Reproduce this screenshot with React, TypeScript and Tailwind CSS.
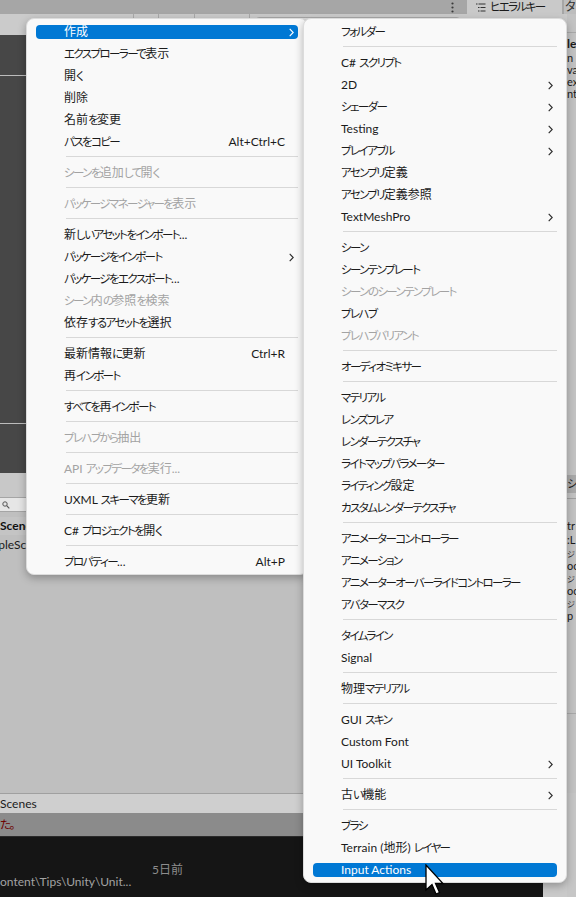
import React from 'react';

type Entry =
  | { label: string; shortcut?: string; arrow?: boolean; disabled?: boolean; active?: boolean }
  | 'sep';

const leftItems: Entry[] = [
  { label: '作成', arrow: true, active: true },
  { label: 'エクスプローラーで表示' },
  { label: '開く' },
  { label: '削除' },
  { label: '名前を変更' },
  { label: 'パスをコピー', shortcut: 'Alt+Ctrl+C' },
  'sep',
  { label: 'シーンを追加して開く', disabled: true },
  'sep',
  { label: 'パッケージマネージャーを表示', disabled: true },
  'sep',
  { label: '新しいアセットをインポート...' },
  { label: 'パッケージをインポート', arrow: true },
  { label: 'パッケージをエクスポート...' },
  { label: 'シーン内の参照を検索', disabled: true },
  { label: '依存するアセットを選択' },
  'sep',
  { label: '最新情報に更新', shortcut: 'Ctrl+R' },
  { label: '再インポート' },
  'sep',
  { label: 'すべてを再インポート' },
  'sep',
  { label: 'プレハブから抽出', disabled: true },
  'sep',
  { label: 'API アップデータを実行...', disabled: true },
  'sep',
  { label: 'UXML スキーマを更新' },
  'sep',
  { label: 'C# プロジェクトを開く' },
  'sep',
  { label: 'プロパティー...', shortcut: 'Alt+P' },
];

const subItems: Entry[] = [
  { label: 'フォルダー' },
  'sep',
  { label: 'C# スクリプト' },
  { label: '2D', arrow: true },
  { label: 'シェーダー', arrow: true },
  { label: 'Testing', arrow: true },
  { label: 'プレイアブル', arrow: true },
  { label: 'アセンブリ定義' },
  { label: 'アセンブリ定義参照' },
  { label: 'TextMeshPro', arrow: true },
  'sep',
  { label: 'シーン' },
  { label: 'シーンテンプレート' },
  { label: 'シーンのシーンテンプレート', disabled: true },
  { label: 'プレハブ' },
  { label: 'プレハブバリアント', disabled: true },
  'sep',
  { label: 'オーディオミキサー' },
  'sep',
  { label: 'マテリアル' },
  { label: 'レンズフレア' },
  { label: 'レンダーテクスチャ' },
  { label: 'ライトマップパラメーター' },
  { label: 'ライティング設定' },
  { label: 'カスタムレンダーテクスチャ' },
  'sep',
  { label: 'アニメーターコントローラー' },
  { label: 'アニメーション' },
  { label: 'アニメーターオーバーライドコントローラー' },
  { label: 'アバターマスク' },
  'sep',
  { label: 'タイムライン' },
  { label: 'Signal' },
  'sep',
  { label: '物理マテリアル' },
  'sep',
  { label: 'GUI スキン' },
  { label: 'Custom Font' },
  { label: 'UI Toolkit', arrow: true },
  'sep',
  { label: '古い機能', arrow: true },
  'sep',
  { label: 'ブラシ' },
  { label: 'Terrain (地形) レイヤー' },
  { label: 'Input Actions', active: true },
];

// Kana are drawn a touch smaller and tighter, as Yu Gothic UI does.
function Label({ text }: { text: string }) {
  const parts = text.split(/([\u3040-\u30ff]+)/);
  return (
    <>
      {parts.map((p, i) =>
        /^[\u3040-\u30ff]+$/.test(p) ? (
          <span key={i} className="text-[11.5px] tracking-[-1.6px]">
            {p}
          </span>
        ) : (
          <span key={i}>{p}</span>
        )
      )}
    </>
  );
}

function Chevron({ white }: { white?: boolean }) {
  return (
    <svg width="5" height="9" viewBox="0 0 5 9" className="block">
      <path
        d="M0.7 0.8 L4.2 4.5 L0.7 8.2"
        fill="none"
        stroke={white ? '#ffffff' : '#2a2a2a'}
        strokeWidth="1.1"
      />
    </svg>
  );
}

function Menu({ items, pos }: { items: Entry[]; pos: string }) {
  return (
    <div
      className={`absolute top-[18px] rounded-[8px] border border-[#dcdcdc] bg-[#f9f9f9] px-[9px] pt-[1px] pb-[2px] shadow-[0_3px_8px_rgba(0,0,0,0.28)] ${pos}`}
    >
      {items.map((it, i) =>
        it === 'sep' ? (
          <div key={i} className="flex h-[9px] items-center">
            <div className="ml-[30px] h-px flex-1 bg-[#d8d8d8]" />
          </div>
        ) : (
          <div key={i} className="h-[22px] pt-[5px]">
            <div
              className={`flex h-[14px] items-center rounded-[4px] pl-[28px] pr-[4px] ${
                it.active
                  ? 'bg-[#0078d4] text-white'
                  : it.disabled
                  ? 'text-[#a3a3a3]'
                  : 'text-[#1b1b1b]'
              }`}
            >
              <span className="flex-1 whitespace-nowrap leading-[14px]">
                <Label text={it.label} />
              </span>
              {it.shortcut && <span className="whitespace-nowrap leading-[14px]">{it.shortcut}</span>}
              <span className="flex w-[9px] justify-end">{it.arrow && <Chevron white={it.active} />}</span>
            </div>
          </div>
        )
      )}
    </div>
  );
}

export default function App() {
  return (
    <div className="relative h-[897px] w-[576px] overflow-hidden bg-[#c2c2c2] font-['Lato','Noto_Sans_CJK_JP',sans-serif] text-[12px] [font-feature-settings:'palt']">
      <div className="flex h-full flex-col">
        {/* title / tab row */}
        <div className="flex h-[14px] bg-[#a6a6a6]">
          <div className="flex w-[467px] items-center justify-end pr-[13px]">
            <svg width="3" height="11" viewBox="0 0 3 11">
              <circle cx="1.5" cy="1.5" r="1.1" fill="#3a3a3a" />
              <circle cx="1.5" cy="5.5" r="1.1" fill="#3a3a3a" />
              <circle cx="1.5" cy="9.5" r="1.1" fill="#3a3a3a" />
            </svg>
          </div>
          <div className="flex w-[95px] items-center gap-[4px] bg-[#c9c9c9] pl-[9px] text-[#1b1b1b]">
            <svg width="10" height="9" viewBox="0 0 10 9">
              <rect x="0" y="0.5" width="1.5" height="1" fill="#333" />
              <rect x="2.5" y="0.5" width="7" height="1" fill="#333" />
              <rect x="2" y="4" width="1.5" height="1" fill="#333" />
              <rect x="4.5" y="4" width="5" height="1" fill="#333" />
              <rect x="2" y="7.5" width="1.5" height="1" fill="#333" />
              <rect x="4.5" y="7.5" width="5" height="1" fill="#333" />
            </svg>
            <span className="leading-[14px]">
              <Label text="ヒエラルキー" />
            </span>
          </div>
          <div className="w-[2px]" />
          <div className="flex-1 overflow-hidden bg-[#bdbdbd] pl-[1px] leading-[14px] text-[#333]">タ</div>
        </div>

        {/* middle */}
        <div className="flex h-[779px]">
          <div className="flex w-[465px] flex-col">
            <div className="flex h-[21px] items-start bg-[#cbcbcb]">
              <div className="h-[20px] w-[134px] border-r border-[#a9a9a9]" />
              <div className="h-[20px] w-[25px] border-r border-[#a9a9a9]" />
              <div className="h-[20px] w-[36px] border-r border-[#a9a9a9]" />
              <div className="h-[20px] w-[55px] border-r border-[#a9a9a9]" />
              <div className="ml-[6px] mt-[3px] h-[15px] w-[204px] rounded-[3px] border border-[#a9a9a9] bg-[#e2e2e2]" />
            </div>
            <div className="flex h-[438px] flex-col bg-[#474747]">
              <div className="mt-[40px] h-px bg-[#bcbcbc]" />
              <div className="mt-[347px] h-px bg-[#bcbcbc]" />
            </div>
            <div className="flex flex-1 flex-col bg-[#bfbfbf]">
              <div className="h-[24px] bg-[#c8c8c8]" />
              <div className="flex h-[15px] items-center border-y border-[#a5a5a5] bg-[#e6e6e6] pl-[2px]">
                <svg width="8" height="8" viewBox="0 0 8 8">
                  <circle cx="3" cy="3" r="2.2" fill="none" stroke="#555" strokeWidth="1" />
                  <path d="M4.7 4.7 L7.3 7.3" stroke="#555" strokeWidth="1.2" />
                </svg>
              </div>
              <div className="h-[5px]" />
              <div className="h-[18px] overflow-hidden whitespace-nowrap bg-[#c4c4c4] font-bold leading-[18px] text-[#111]">
                Scenes
              </div>
              <div className="h-[20px] overflow-hidden whitespace-nowrap leading-[20px] text-[#1b1b1b]">
                <span className="ml-[-24px]">SampleScene</span>
              </div>
            </div>
          </div>
          <div className="flex w-[102px] flex-col bg-[#c3c3c3]">
            <div className="h-[20px] border-b border-[#a9a9a9] bg-[#cbcbcb]" />
          </div>
          <div className="flex flex-1 flex-col overflow-hidden whitespace-nowrap bg-[#c3c3c3] text-[11px] text-[#1b1b1b]">
            <div className="h-[18px]" />
            <div className="h-px bg-[#a9a9a9]" />
            <div className="h-[3px]" />
            <div className="text-[12px] font-bold leading-[16px]">le</div>
            <div className="leading-[12px]">n</div>
            <div className="leading-[12px]">va</div>
            <div className="leading-[12px]">ex</div>
            <div className="leading-[12px]">nt</div>
            <div className="h-[375px]" />
            <div className="h-[18px] bg-[#a9a9a9] leading-[18px]">シ</div>
            <div className="h-[5px]" />
            <div className="h-px bg-[#a0a0a0]" />
            <div className="h-[20px]" />
            <div className="leading-[14px]">tr</div>
            <div className="leading-[14px]">:L</div>
            <div className="mt-[2px] text-[8px] leading-[10px]">ジ</div>
            <div className="leading-[14px]">oo</div>
            <div className="mt-[1px] text-[8px] leading-[10px]">ジ</div>
            <div className="leading-[14px]">oo</div>
            <div className="mt-[1px] text-[8px] leading-[10px]">ジ</div>
            <div className="leading-[14px]">p</div>
            <div className="h-[90px]" />
            <div className="h-px bg-[#a9a9a9]" />
          </div>
        </div>

        {/* bottom */}
        <div className="flex h-[104px]">
          <div className="flex w-[567px] flex-col">
            <div className="h-[20px] border-t border-[#a0a0a0] bg-[#cfcfcf] leading-[19px] text-[#1b1b1b]">Scenes</div>
            <div className="h-[23px] bg-[#8b8b8b] leading-[23px] text-[#6e0000]">
              <Label text="た。" />
            </div>
            <div className="h-px bg-[#2a2a2a]" />
            <div className="flex h-[60px]">
              <div className="flex w-[543px] bg-[#151515]">
                <div className="w-[152px] whitespace-nowrap pt-[38px] leading-[14px] text-[#a3a3a3]">
                  ontent\Tips\Unity\Unit...
                </div>
                <div className="pt-[26px] leading-[14px] text-[#8d8d8d]">5日前</div>
              </div>
              <div className="flex-1 bg-[#c9c9c9]" />
            </div>
          </div>
          <div className="flex-1 bg-[#c6c6c6]" />
        </div>
      </div>

      <Menu items={leftItems} pos="left-[26px] w-[282px]" />
      <Menu items={subItems} pos="left-[303px] w-[264px]" />

      {/* mouse cursor */}
      <svg className="absolute left-[425px] top-[864px]" width="20" height="32" viewBox="0 0 20 32">
        <path
          d="M1 1 L1 26 L7 20.5 L11 30 L14.5 28.5 L10.5 19.5 L18 19.5 Z"
          fill="#ffffff"
          stroke="#000000"
          strokeWidth="1.3"
          strokeLinejoin="miter"
        />
      </svg>
    </div>
  );
}
